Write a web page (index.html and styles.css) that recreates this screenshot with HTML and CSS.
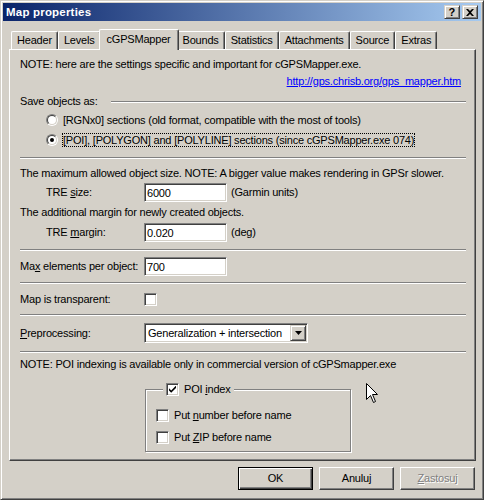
FILE: index.html
```html
<!DOCTYPE html>
<html>
<head>
<meta charset="utf-8">
<title>Map properties</title>
<link rel="stylesheet" href="styles.css">
</head>
<body>
<div class="window">
  <div class="titlebar">
    <span class="title">Map properties</span>
    <div class="caption-btns">
      <span class="cbtn help">?</span>
      <span class="cbtn close"><svg width="8" height="7" viewBox="0 0 8 7"><path d="M0 0h2l2 2 2-2h2L5 3.5 8 7H6L4 5 2 7H0l3-3.5z" fill="#000"/></svg></span>
    </div>
  </div>
  <div class="client">
    <div class="tabs">
      <div class="tab">Header</div>
      <div class="tab">Levels</div>
      <div class="tab active">cGPSMapper</div>
      <div class="tab">Bounds</div>
      <div class="tab">Statistics</div>
      <div class="tab">Attachments</div>
      <div class="tab">Source</div>
      <div class="tab">Extras</div>
    </div>
    <div class="panel">
      <div class="note">NOTE: here are the settings specific and important for cGPSMapper.exe.</div>
      <div class="link-row"><span class="link">http://gps.chrisb.org/gps_mapper.htm</span></div>
      <div class="group-head"><span>Save objects as:</span><span class="etch-line"></span></div>
      <div class="radio-row first"><span class="radio"><span class="radio-in"></span></span><span class="radio-label">[RGNx0] sections (old format, compatible with the most of tools)</span></div>
      <div class="radio-row"><span class="radio"><span class="radio-in"><span class="dot"></span></span></span><span class="radio-label focus">[POI], [POLYGON] and [POLYLINE] sections (since cGPSMapper.exe 074)</span></div>
      <div class="sep s7"></div>
      <div class="text t8">The maximum allowed object size. NOTE: A bigger value makes rendering in GPSr slower.</div>
      <div class="field-row m3"><span class="label indent">TRE <u>s</u>ize:</span><span class="input">6000</span><span class="suffix">(Garmin units)</span></div>
      <div class="text t4">The additional margin for newly created objects.</div>
      <div class="field-row m4"><span class="label indent">TRE <u>m</u>argin:</span><span class="input">0.020</span><span class="suffix">(deg)</span></div>
      <div class="sep s7"></div>
      <div class="field-row m6"><span class="label">Ma<u>x</u> elements per object:</span><span class="input">700</span></div>
      <div class="sep s6"></div>
      <div class="check-row"><span class="label">Map is transparent:</span><span class="checkbox"></span></div>
      <div class="sep s5"></div>
      <div class="select-row"><span class="label"><u>P</u>reprocessing:</span><span class="select"><span class="select-text">Generalization + intersection</span><span class="drop-btn"><svg width="7" height="4" viewBox="0 0 7 4"><path d="M0 0h7L3.5 4z" fill="#000"/></svg></span></span></div>
      <div class="sep s8"></div>
      <div class="text t5">NOTE: POI indexing is available only in commercial version of cGPSmapper.exe</div>
      <fieldset class="groupbox">
        <legend class="legend"><span class="checkbox checked"><svg width="7" height="7" viewBox="0 0 7 7"><path d="M0 2.2l2.2 2.2L7 -0.4V2L2.2 6.8 0 4.6z" fill="#000"/></svg></span><span class="cb-label">POI <u>i</u>ndex</span></legend>
        <div class="cb-row"><span class="checkbox"></span><span class="cb-label">Put <u>n</u>umber before name</span></div>
        <div class="cb-row"><span class="checkbox"></span><span class="cb-label">Put <u>Z</u>IP before name</span></div>
      </fieldset>
    </div>
    <div class="buttons">
      <span class="btn default">OK</span>
      <span class="btn">Anuluj</span>
      <span class="btn disabled"><u>Z</u>astosuj</span>
    </div>
  </div>
  <svg class="cursor" width="13" height="21" viewBox="0 0 13 21"><path d="M0.5 0.5V16.5L4.5 12.5L7.5 19.5L9.5 18.5L6.5 11.5H11.5Z" fill="#fff" stroke="#000" stroke-width="1"/></svg>
</div>
</body>
</html>
```

FILE: styles.css
```css
* { box-sizing: border-box; }
html, body { margin: 0; padding: 0; }
body {
  width: 484px;
  height: 500px;
  background: #D4D0C8;
  font-family: "Liberation Sans", Arial, sans-serif;
  font-size: 11px;
  line-height: 13px;
  letter-spacing: -0.2px;
  color: #000;
  overflow: hidden;
}
u { text-decoration: underline; text-underline-offset: 1px; }

.window {
  position: relative;
  width: 484px;
  height: 500px;
  background: #D4D0C8;
  border: 1px solid;
  border-color: #D4D0C8 #404040 #404040 #D4D0C8;
  box-shadow: inset 1px 1px 0 #fff, inset -1px -1px 0 #808080;
  padding: 2px;
  display: flex;
  flex-direction: column;
}

.titlebar {
  height: 18px;
  background: linear-gradient(to right, #0A246A, #A6CAF0);
  display: flex;
  align-items: center;
  justify-content: space-between;
  padding: 0 3px 0 3px;
  color: #fff;
  font-weight: bold;
  letter-spacing: 0.2px;
  font-size: 11.5px;
}
.caption-btns { display: flex; gap: 2px; }
.cbtn {
  width: 16px;
  height: 14px;
  background: #D4D0C8;
  border: 1px solid;
  border-color: #D4D0C8 #404040 #404040 #D4D0C8;
  box-shadow: inset 1px 1px 0 #fff, inset -1px -1px 0 #808080;
  display: flex;
  align-items: center;
  justify-content: center;
  color: #000;
  font-size: 11px;
  line-height: 12px;
}

.client {
  flex: 1;
  display: flex;
  flex-direction: column;
  padding: 8px 5px 0 6px;
}

.tabs {
  display: flex;
  align-items: flex-end;
  height: 20px;
  padding-left: 2px;
}
.tab {
  height: 18px;
  padding: 0 5px;
  display: flex;
  align-items: center;
  border-top: 1px solid #fff;
  border-left: 1px solid #fff;
  border-right: 1px solid #404040;
  border-top-left-radius: 2px;
  border-top-right-radius: 2px;
  box-shadow: inset -1px 0 0 #808080;
  background: #D4D0C8;
}
.tab.active {
  height: 21px;
  margin: 0 -2px -1px -2px;
  padding: 0 7px 2px 7px;
  position: relative;
  z-index: 1;
}

.panel {
  height: 412px;
  border: 1px solid;
  border-color: #fff #404040 #404040 #fff;
  box-shadow: inset -1px -1px 0 #808080;
  padding: 0 9px 0 10px;
  display: flex;
  flex-direction: column;
}
.note { margin-top: 8px; }
.link-row { margin-top: 4px; text-align: right; padding-right: 5px; }
.link { color: #0000FF; text-decoration: underline; }

.group-head { margin-top: 7px; display: flex; align-items: center; }
.etch-line {
  flex: 1;
  margin-left: 13px;
  height: 2px;
  border-top: 1px solid #808080;
  border-bottom: 1px solid #fff;
}

.radio-row {
  height: 20px;
  display: flex;
  align-items: center;
  padding-left: 26px;
}
.radio-row.first { margin-top: 2px; }
.radio {
  width: 12px;
  height: 12px;
  border-radius: 50%;
  border: 1px solid;
  border-color: #808080 #fff #fff #808080;
  display: flex;
}
.radio-in {
  width: 10px;
  height: 10px;
  border-radius: 50%;
  border: 1px solid;
  border-color: #404040 #D4D0C8 #D4D0C8 #404040;
  background: #fff;
  display: flex;
  align-items: center;
  justify-content: center;
}
.dot { width: 4px; height: 4px; border-radius: 50%; background: #000; }
.radio-label { margin-left: 5px; }
.radio-label.focus { margin-left: 4px; border: 1px dotted #000; line-height: 12px; }

.sep {
  height: 2px;
  border-top: 1px solid #808080;
  border-bottom: 1px solid #fff;
}
.s5 { margin-top: 5px; }
.s6 { margin-top: 6px; }
.s7 { margin-top: 7px; }
.s8 { margin-top: 8px; }
.t4 { margin-top: 4px; }
.t5 { margin-top: 5px; }
.t8 { margin-top: 8px; }

.field-row, .check-row, .select-row {
  display: grid;
  grid-template-columns: 124px auto auto;
  justify-content: start;
  align-items: center;
}
.field-row { height: 19px; }
.m3 { margin-top: 3px; }
.m4 { margin-top: 4px; }
.m6 { margin-top: 6px; }
.label.indent { padding-left: 26px; }
.input {
  width: 83px;
  height: 19px;
  background: #fff;
  border: 1px solid;
  border-color: #808080 #fff #fff #808080;
  box-shadow: inset 1px 1px 0 #404040, inset -1px -1px 0 #D4D0C8;
  padding: 2px 2px 0 2px;
  line-height: 14px;
}
.suffix { margin-left: 4px; }

.check-row { height: 19px; margin-top: 6px; }
.checkbox {
  width: 13px;
  height: 13px;
  background: #fff;
  border: 1px solid;
  border-color: #808080 #fff #fff #808080;
  box-shadow: inset 1px 1px 0 #404040, inset -1px -1px 0 #D4D0C8;
  display: flex;
  align-items: center;
  justify-content: center;
  flex: none;
}

.select-row { height: 20px; margin-top: 7px; }
.select {
  width: 164px;
  height: 20px;
  background: #fff;
  border: 1px solid;
  border-color: #808080 #fff #fff #808080;
  box-shadow: inset 1px 1px 0 #404040, inset -1px -1px 0 #D4D0C8;
  display: flex;
  align-items: center;
  justify-content: space-between;
  padding: 1px 1px 1px 3px;
}
.select-text { line-height: 14px; }
.drop-btn {
  width: 16px;
  height: 16px;
  background: #D4D0C8;
  border: 1px solid;
  border-color: #D4D0C8 #404040 #404040 #D4D0C8;
  box-shadow: inset 1px 1px 0 #fff, inset -1px -1px 0 #808080;
  display: flex;
  align-items: center;
  justify-content: center;
}

.groupbox {
  margin: 12px 0 0 125px;
  width: 206px;
  height: 69px;
  padding: 0 0 0 10px;
  border: 1px solid #808080;
  box-shadow: 1px 1px 0 #fff, inset 1px 1px 0 #fff;
  min-width: 0;
}
.legend {
  margin-left: 7px;
  padding: 0 3px;
  background: #D4D0C8;
  display: flex;
  align-items: center;
  height: 13px;
}
.cb-label { margin-left: 5px; }
.cb-row {
  height: 22px;
  display: flex;
  align-items: center;
}
.cb-row:first-of-type { margin-top: 8px; }

.buttons {
  margin-top: 6px;
  display: flex;
  justify-content: flex-end;
  gap: 6px;
  padding-right: 1px;
}
.btn {
  width: 75px;
  height: 23px;
  display: flex;
  align-items: center;
  justify-content: center;
  border: 1px solid;
  border-color: #fff #404040 #404040 #fff;
  box-shadow: inset -1px -1px 0 #808080;
  background: #D4D0C8;
}
.btn.default {
  border-color: #000;
  box-shadow: inset 1px 1px 0 #fff, inset -1px -1px 0 #404040, inset -2px -2px 0 #808080;
}
.btn.disabled { color: #808080; text-shadow: 1px 1px 0 #fff; }

.cursor { position: absolute; left: 365px; top: 382px; }
```
